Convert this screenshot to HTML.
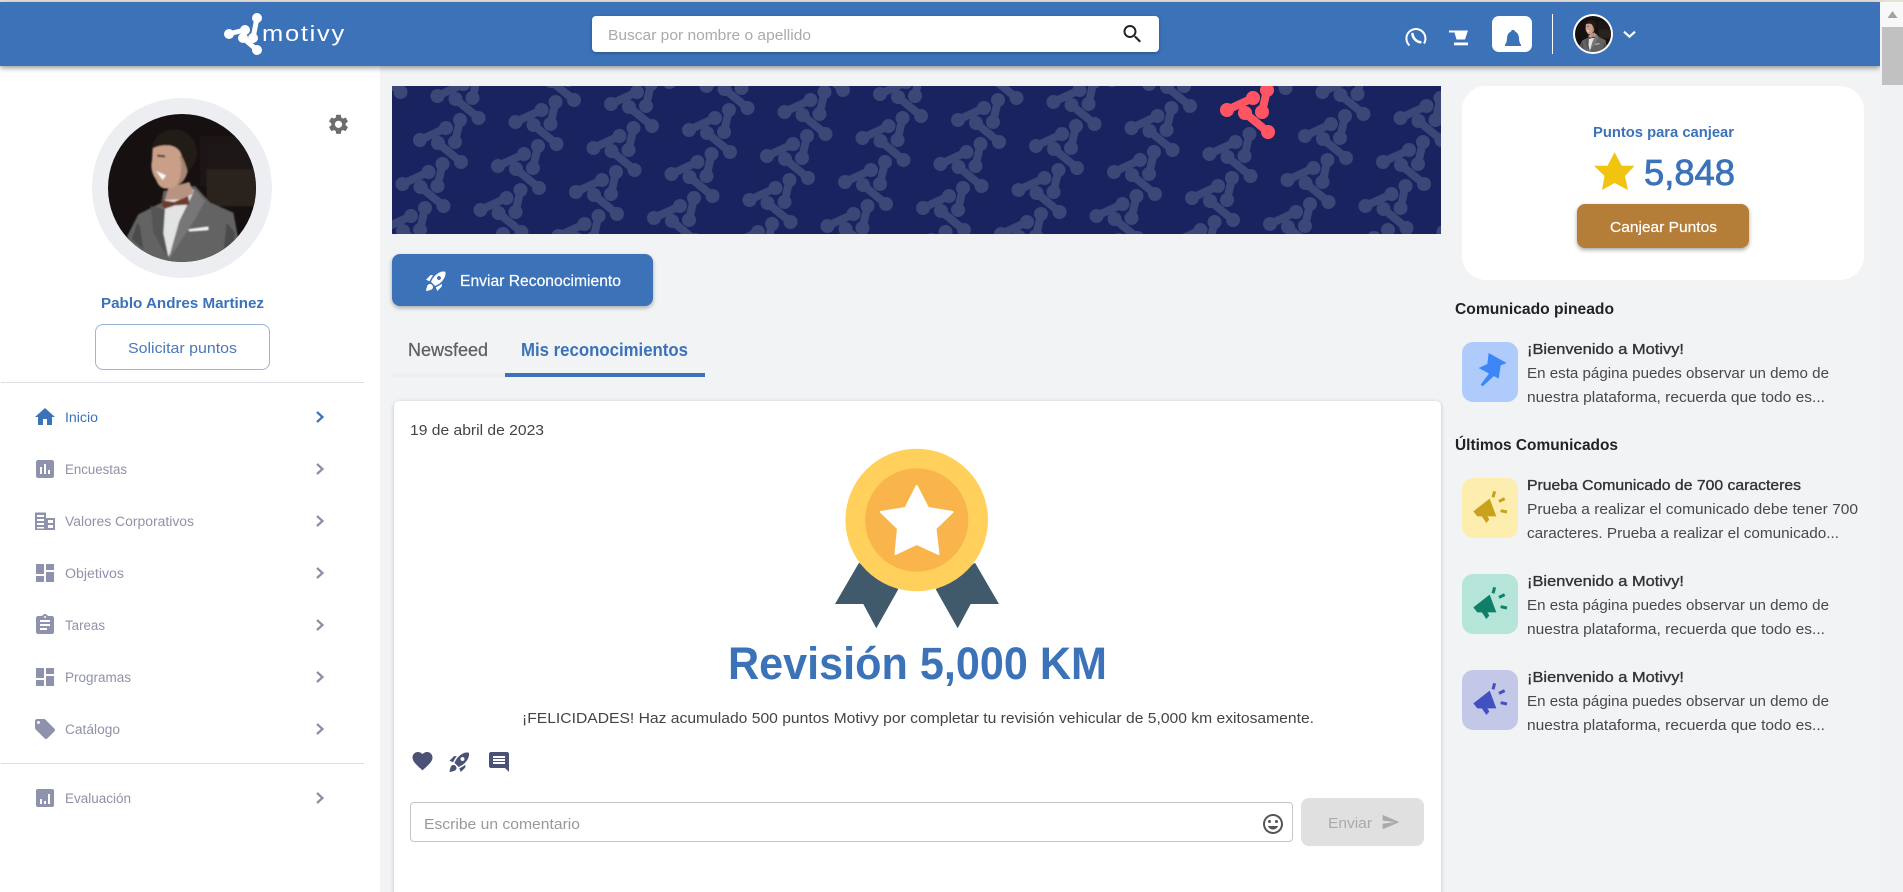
<!DOCTYPE html>
<html lang="es">
<head>
<meta charset="utf-8">
<title>Motivy</title>
<style>
html,body{margin:0;padding:0;width:1903px;height:892px;overflow:hidden;background:#f2f3f5}
body{position:relative;font-family:"Liberation Sans",sans-serif}
div,header,aside,main{position:absolute;box-sizing:border-box}
svg{position:absolute;left:0;top:0;overflow:hidden}
text{font-family:"Liberation Sans",sans-serif}
.nav{font-size:13.5px;fill:#8f92a8}
.ln{font-size:15px;fill:#484848}
.tt{font-size:15px;fill:#333;stroke:#333;stroke-width:.35px}
.hd{font-size:15.5px;font-weight:bold;fill:#222}
</style>
</head>
<body>
<div style="left:0;top:0;width:1903px;height:2px;background:#e6e1d8"></div>
<aside style="left:0;top:66px;width:380px;height:826px;background:#fff"></aside>
<header style="left:0;top:2px;width:1880px;height:64px;background:#3b72b8;box-shadow:0 2px 5px rgba(0,0,0,.4)"></header>
<div style="left:1880px;top:2px;width:23px;height:890px;background:#f1f2f4"></div>
<div style="left:1880px;top:2px;width:23px;height:25px;background:#f8f8f8"></div>
<div style="left:1882px;top:27px;width:21px;height:58px;background:#c1c1c1"></div>
<div style="left:592px;top:16px;width:567px;height:36px;background:#fff;border-radius:4px;box-shadow:0 1px 3px rgba(0,0,0,.3)"></div>
<div style="left:1492px;top:16px;width:40px;height:36px;background:#fff;border-radius:7px"></div>
<div style="left:1552px;top:14px;width:1px;height:40px;background:#fff"></div>
<div style="left:92px;top:98px;width:180px;height:180px;border-radius:50%;background:#eceef2"></div>
<div style="left:95px;top:324px;width:175px;height:46px;background:#fff;border:1px solid #9db4da;border-radius:8px"></div>
<div style="left:1px;top:382px;width:363px;height:1px;background:#dcdfe4"></div>
<div style="left:1px;top:763px;width:363px;height:1px;background:#dcdfe4"></div>

<svg style="left:392px;top:86px" width="1049" height="148" viewBox="0 0 1049 148">
  <defs>
    <g id="m" fill="currentColor" stroke="currentColor" stroke-width="0">
      <line x1="-18" y1="-3" x2="8" y2="-15" stroke-width="8"/><circle cx="-18" cy="-3" r="7"/><circle cx="8" cy="-15" r="7"/>
      <line x1="22" y1="-23" x2="17" y2="-1" stroke-width="8"/><circle cx="22" cy="-23" r="7"/><circle cx="17" cy="-1" r="7"/>
      <line x1="0" y1="0" x2="23" y2="19" stroke-width="8"/><circle cx="0" cy="0" r="7"/><circle cx="23" cy="19" r="7"/>
    </g>
    <g id="r2"><use href="#m"/><use href="#m" x="78" y="26"/></g>
    <g id="r4"><use href="#r2"/><use href="#r2" x="156" y="52"/></g>
    <g id="r8"><use href="#r4"/><use href="#r4" x="312" y="104"/></g>
    <g id="r16"><use href="#r8"/><use href="#r8" x="624" y="208"/></g>
    <g id="c2"><use href="#r16"/><use href="#r16" x="-17.5" y="44"/></g>
    <g id="c4"><use href="#c2"/><use href="#c2" x="-35" y="88"/></g>
    <g id="c8"><use href="#c4"/><use href="#c4" x="-70" y="176"/></g>
    <g id="c16"><use href="#c8"/><use href="#c8" x="-140" y="352"/></g>
  </defs>
  <rect width="1049" height="148" fill="#182360"/>
  <g style="color:#3a4777"><use href="#c16" x="65" y="-435"/></g>
  <g style="color:#ff5462"><use href="#m" x="853" y="27"/></g>
</svg>

<div style="left:392px;top:254px;width:261px;height:52px;background:#3b72b8;border-radius:8px;box-shadow:0 2px 4px rgba(0,0,0,.3)"></div>
<div style="left:392px;top:373px;width:113px;height:4px;background:#eeeff1"></div>
<div style="left:505px;top:373px;width:200px;height:4px;background:#3b72b8"></div>
<main style="left:394px;top:401px;width:1047px;height:520px;background:#fff;border-radius:5px;box-shadow:0 1px 4px rgba(0,0,0,.22)"></main>
<div style="left:410px;top:802px;width:883px;height:40px;background:#fff;border:1px solid #c6c6c6;border-radius:4px"></div>
<div style="left:1301px;top:798px;width:123px;height:48px;background:#e0e0e0;border-radius:8px"></div>
<div style="left:1462px;top:86px;width:402px;height:194px;background:#fff;border-radius:24px"></div>
<div style="left:1577px;top:204px;width:172px;height:44px;background:#b47d38;border-radius:8px;box-shadow:0 2px 4px rgba(0,0,0,.35)"></div>
<div style="left:1462px;top:342px;width:56px;height:60px;background:#aecbfc;border-radius:11px"></div>
<div style="left:1462px;top:478px;width:56px;height:60px;background:#fdeeb0;border-radius:11px"></div>
<div style="left:1462px;top:574px;width:56px;height:60px;background:#b5e5d9;border-radius:11px"></div>
<div style="left:1462px;top:670px;width:56px;height:60px;background:#c3c8e8;border-radius:11px"></div>

<svg width="1903" height="892" viewBox="0 0 1903 892">
  <defs>
    <clipPath id="pc"><circle cx="246" cy="246" r="222"/></clipPath>
    <filter id="bl" x="-5%" y="-5%" width="110%" height="110%"><feGaussianBlur stdDeviation="2.5"/></filter>
    <g id="photo" clip-path="url(#pc)">
      <rect width="492" height="492" fill="#161110"/>
      <g filter="url(#bl)">
        <rect x="300" y="90" width="190" height="150" fill="#1f1815"/>
        <rect x="320" y="190" width="170" height="110" fill="#2b221e"/>
        <path d="M190 255L285 240 330 290 400 320 415 400 400 480 100 480 82 390 115 325 185 290z" fill="#636363"/>
        <path d="M112 350L95 400 130 430 120 360zM380 350L370 440 400 430 405 380z" fill="#4c4c4c"/>
        <path d="M188 300L190 380 205 452 250 385 285 290 280 250 200 270z" fill="#e2e3e3"/>
        <path d="M285 250L315 285 285 340 205 462 238 345z" fill="#777"/>
        <path d="M152 300L195 310 190 385 205 460 160 380z" fill="#555"/>
        <path d="M205 245L268 228 282 262 240 280 195 282z" fill="#b89380"/>
        <path d="M158 125C172 108 215 105 235 125C250 150 255 190 250 215C240 240 215 250 192 247C178 243 172 232 168 220C160 212 150 185 156 165z" fill="#c99f89"/>
        <path d="M238 150C258 150 268 180 262 200C255 225 240 235 228 242C245 215 248 180 238 150z" fill="#a98572"/>
        <path d="M158 128C155 100 185 70 225 70C265 72 292 105 290 145C288 170 275 190 262 195C258 175 250 160 245 150C240 130 225 118 200 118C185 118 170 120 158 128z" fill="#211a18"/>
        <path d="M172 146L195 148 195 154 172 152z" fill="#4a3229"/>
        <path d="M168 195L198 208 188 222z" fill="#fbf8f5"/>
        <path d="M183 282L222 288 265 270 268 296 225 298 190 310z" fill="#6e3b2f"/>
        <path d="M265 370L325 362 325 372 268 376z" fill="#f4f4f4"/>
      </g>
    </g>
    <g id="mega" transform="scale(.3333)" fill="currentColor" stroke="currentColor">
      <path d="M34 100L83 62 103 115 46 115z" stroke="none"/>
      <path d="M58 113L73 135 82 125 72 108z" stroke="none"/>
      <path d="M98 40L93 58M111 70L128 62M116 98L135 102" stroke-width="9" fill="none"/>
    </g>
  </defs>

  <!-- logo -->
  <g fill="#fff" stroke="#fff">
    <line x1="228" y1="34" x2="245" y2="30" stroke-width="5"/>
    <line x1="257" y1="18" x2="253" y2="38" stroke-width="5"/>
    <line x1="243" y1="38" x2="257" y2="50" stroke-width="5"/>
    <g stroke="none"><circle cx="229" cy="34" r="5"/><circle cx="245" cy="30" r="5"/><circle cx="257" cy="18" r="5"/><circle cx="253" cy="38" r="5"/><circle cx="243" cy="38" r="5"/><circle cx="257" cy="50" r="5"/></g>
  </g>
  <text x="262" y="41" font-size="22" letter-spacing="1.5" fill="#fff" textLength="84" lengthAdjust="spacingAndGlyphs">motivy</text>

  <!-- header -->
  <text x="608" y="40" font-size="15" fill="#aaa" textLength="203" lengthAdjust="spacingAndGlyphs">Buscar por nombre o apellido</text>
  <path transform="translate(1120.500 22)" fill="#222" d="M15.5 14h-.79l-.28-.27C15.41 12.59 16 11.11 16 9.5 16 5.91 13.09 3 9.5 3S3 5.91 3 9.5 5.91 16 9.5 16c1.61 0 3.09-.59 4.23-1.57l.27.28v.79l5 4.99L20.49 19l-4.99-5zm-6 0C7.01 14 5 11.99 5 9.5S7.01 5 9.5 5 14 7.01 14 9.5 11.99 14 9.500 14z"/>
  <path d="M1409.500 45.500A9.500 9.500 0 1 1 1424 43.500" fill="none" stroke="#fff" stroke-width="2"/>
  <path d="M1412.500 34c.2 3.600 3.500 7.600 7.800 8.200" fill="none" stroke="#fff" stroke-width="2.600" stroke-linecap="round"/>
  <path d="M1449 30.500h19l-3 9h-8.500l-2-7h-5.500z" fill="#fff"/>
  <rect x="1454" y="42.500" width="14" height="2.800" fill="#fff"/>
  <path d="M1505 46h16v-1.200c-2-2.500-1.800-5-2.200-8-.3-2.500-1.800-4.500-3.800-5.300l-.8-1.500h-2.400l-.8 1.500c-2 .8-3.500 2.800-3.800 5.300-.4 3-.2 5.500-2.200 8z" fill="#3b72b8"/>
  <circle cx="1593" cy="34" r="20" fill="#fff"/>
  <g transform="translate(1593 34) scale(.0811) translate(-246 -246)"><use href="#photo"/></g>
  <path d="M1624 31.700L1629.500 36.700 1635 31.700" fill="none" stroke="#fff" stroke-width="2.200"/>

  <!-- profile -->
  <g transform="translate(100 106) scale(.3333)"><use href="#photo"/></g>
  <path transform="translate(326.500 112.300)" fill="#6d6d6d" d="M19.140 12.940c.04-.3.06-.61.06-.94 0-.32-.02-.64-.07-.94l2.030-1.580c.18-.14.23-.41.12-.61l-1.920-3.320c-.12-.22-.37-.29-.59-.22l-2.390.96c-.5-.38-1.030-.7-1.620-.94l-.36-2.540c-.04-.24-.24-.41-.48-.41h-3.840c-.24 0-.43.17-.47.41l-.36 2.540c-.59.24-1.130.57-1.620.94l-2.390-.96c-.22-.08-.47 0-.59.22L2.740 8.870c-.12.21-.08.47.12.61l2.030 1.580c-.05.3-.09.63-.09.94s.02.64.07.94l-2.030 1.580c-.18.14-.23.41-.12.61l1.920 3.320c.12.22.37.29.59.22l2.390-.96c.5.38 1.030.7 1.620.94l.36 2.540c.05.24.24.41.48.41h3.840c.24 0 .44-.17.47-.41l.36-2.540c.59-.24 1.130-.56 1.620-.94l2.390.96c.22.08.47 0 .59-.22l1.920-3.320c.12-.22.07-.47-.12-.61l-2.010-1.580zM12 15.600c-1.980 0-3.600-1.620-3.600-3.600s1.620-3.600 3.600-3.600 3.600 1.620 3.600 3.600-1.620 3.600-3.600 3.600z"/>
  <text x="101" y="308" font-size="15" font-weight="bold" fill="#3b72b8" textLength="163" lengthAdjust="spacingAndGlyphs">Pablo Andres Martinez</text>
  <text x="128" y="353" font-size="15" fill="#4a78b8" textLength="109" lengthAdjust="spacingAndGlyphs">Solicitar puntos</text>

  <!-- nav icons -->
  <path transform="translate(33 405)" fill="#3b72b8" d="M10 20v-6h4v6h5v-8h3L12 3 2 12h3v8z"/>
  <g fill="#8f92ac">
    <path transform="translate(33 457)" d="M19 3H5c-1.100 0-2 .9-2 2v14c0 1.100.9 2 2 2h14c1.100 0 2-.9 2-2V5c0-1.100-.9-2-2-2zM9 17H7v-7h2v7zm4 0h-2V7h2v10zm4 0h-2v-4h2v4z"/>
    <path fill-rule="evenodd" d="M35 512.500h11v5.500h9v12H35zM37 515v2h7v-2zM37 519v2h7v-2zM37 523v2h7v-2zM37 527v1.500h7V527zM48 520v3h5v-3zM48 525v3h5v-3z"/>
    <path transform="translate(33 561)" d="M3 13h8V3H3v10zm0 8h8v-6H3v6zm10 0h8V11h-8v10zm0-18v6h8V3h-8z"/>
    <path transform="translate(33 613)" d="M19 3h-4.180C14.400 1.840 13.300 1 12 1c-1.300 0-2.400.84-2.820 2H5c-1.100 0-2 .9-2 2v14c0 1.100.9 2 2 2h14c1.100 0 2-.9 2-2V5c0-1.100-.9-2-2-2zm-7 0c.55 0 1 .45 1 1s-.45 1-1 1-1-.45-1-1 .45-1 1-1zm2 14H7v-2h7v2zm3-4H7v-2h10v2zm0-4H7V7h10v2z"/>
    <path transform="translate(33 665)" d="M3 13h8V3H3v10zm0 8h8v-6H3v6zm10 0h8V11h-8v10zm0-18v6h8V3h-8z"/>
    <path transform="translate(33 717)" d="M21.410 11.580l-9-9C12.050 2.220 11.550 2 11 2H4c-1.100 0-2 .9-2 2v7c0 .55.22 1.050.59 1.420l9 9c.36.36.86.58 1.410.58.55 0 1.050-.22 1.410-.59l7-7c.37-.36.59-.86.59-1.410 0-.55-.23-1.060-.59-1.420zM5.500 7C4.670 7 4 6.330 4 5.500S4.670 4 5.500 4 7 4.670 7 5.500 6.330 7 5.500 7z"/>
    <path fill-rule="evenodd" d="M38 789h14a2 2 0 0 1 2 2v14a2 2 0 0 1-2 2H38a2 2 0 0 1-2-2v-14a2 2 0 0 1 2-2zM40 799v5h2v-5zM44 801v3h2v-3zM48 794v10h2v-10z"/>
  </g>
  <!-- nav text -->
  <text x="65" y="422" font-size="13.500" fill="#3b72b8" textLength="33" lengthAdjust="spacingAndGlyphs">Inicio</text>
  <text class="nav" x="65" y="474" textLength="62" lengthAdjust="spacingAndGlyphs">Encuestas</text>
  <text class="nav" x="65" y="526" textLength="129" lengthAdjust="spacingAndGlyphs">Valores Corporativos</text>
  <text class="nav" x="65" y="578" textLength="59" lengthAdjust="spacingAndGlyphs">Objetivos</text>
  <text class="nav" x="65" y="630" textLength="40" lengthAdjust="spacingAndGlyphs">Tareas</text>
  <text class="nav" x="65" y="682" textLength="66" lengthAdjust="spacingAndGlyphs">Programas</text>
  <text class="nav" x="65" y="734" textLength="55" lengthAdjust="spacingAndGlyphs">Catálogo</text>
  <text class="nav" x="65" y="803" textLength="66" lengthAdjust="spacingAndGlyphs">Evaluación</text>
  <g fill="none" stroke-width="2.200">
    <path d="M317 412L322.500 417 317 422" stroke="#3b72b8"/>
    <g stroke="#8a8fa6">
      <path d="M317 464L322.500 469 317 474"/><path d="M317 516L322.500 521 317 526"/><path d="M317 568L322.500 573 317 578"/><path d="M317 620L322.500 625 317 630"/><path d="M317 672L322.500 677 317 682"/><path d="M317 724L322.500 729 317 734"/><path d="M317 793L322.500 798 317 803"/>
    </g>
  </g>

  <!-- button + tabs -->
  <path transform="translate(424 269)" fill="#fff" d="M9.190 6.350c-2.040 2.290-3.440 5.580-3.570 5.890L2 10.690l4.050-4.050c.47-.47 1.150-.68 1.810-.55l1.330.26zM11.170 17c0 0 3.740-1.550 5.890-3.700 5.400-5.400 4.500-9.620 4.210-10.570-.95-.3-5.170-1.190-10.570 4.210C8.550 9.060 7 12.830 7 12.830L11.170 17zm6.480-2.190c-2.290 2.040-5.580 3.440-5.890 3.570L13.310 22l4.050-4.050c.47-.47.68-1.150.55-1.810l-.26-1.330zM9 18c0 .83-.34 1.580-.88 2.120C6.940 21.300 2 22 2 22s.7-4.940 1.880-6.120C4.420 15.340 5.170 15 6 15c1.660 0 3 1.340 3 3zm4-9c0-1.100.9-2 2-2s2 .9 2 2-.9 2-2 2-2-.9-2-2z"/>
  <text x="460" y="286" font-size="15.500" fill="#fff" stroke="#fff" stroke-width=".2" textLength="161" lengthAdjust="spacingAndGlyphs">Enviar Reconocimiento</text>
  <text x="408" y="356" font-size="18" fill="#5f5f5f" stroke="#5f5f5f" stroke-width=".25" textLength="80" lengthAdjust="spacingAndGlyphs">Newsfeed</text>
  <text x="521" y="356" font-size="18" font-weight="bold" fill="#3b72b8" textLength="167" lengthAdjust="spacingAndGlyphs">Mis reconocimientos</text>

  <!-- card -->
  <text x="410" y="435" font-size="15" fill="#444" textLength="134" lengthAdjust="spacingAndGlyphs">19 de abril de 2023</text>
  <path d="M859 562.700L835 604 863.300 604 876.300 628.300 898.300 589.300zM975 562.700L999 604 970.700 604 957.700 628.300 935.700 589.300z" fill="#40596b"/>
  <circle cx="916.700" cy="520" r="71.300" fill="#ffd15c"/>
  <circle cx="916.700" cy="520" r="51.700" fill="#f9b54c"/>
  <path d="M916.700 486L905.500 508 881 512 898 528.500 895.500 554 916.700 544 938.500 554 935.500 528.500 952.500 512 928 508z" fill="#fff" stroke="#fff" stroke-width="2" stroke-linejoin="round"/>
  <text x="728" y="679" font-size="45" font-weight="bold" fill="#3b72b8" textLength="379" lengthAdjust="spacingAndGlyphs">Revisión 5,000 KM</text>
  <text x="522" y="723" font-size="15" fill="#444" textLength="792" lengthAdjust="spacingAndGlyphs">¡FELICIDADES! Haz acumulado 500 puntos Motivy por completar tu revisión vehicular de 5,000 km exitosamente.</text>
  <g fill="#4b5275">
    <path transform="translate(410.500 749)" d="M12 21.350l-1.450-1.320C5.400 15.360 2 12.280 2 8.500 2 5.420 4.420 3 7.500 3c1.740 0 3.410.81 4.500 2.090C13.090 3.810 14.760 3 16.500 3 19.580 3 22 5.420 22 8.500c0 3.780-3.400 6.860-8.550 11.540L12 21.350z"/>
    <path transform="translate(447.500 750)" d="M9.190 6.350c-2.040 2.290-3.440 5.580-3.570 5.890L2 10.690l4.050-4.050c.47-.47 1.150-.68 1.810-.55l1.330.26zM11.170 17c0 0 3.740-1.550 5.890-3.700 5.400-5.400 4.500-9.620 4.210-10.570-.95-.3-5.170-1.190-10.570 4.210C8.550 9.060 7 12.830 7 12.830L11.170 17zm6.480-2.190c-2.290 2.040-5.580 3.440-5.890 3.570L13.310 22l4.050-4.050c.47-.47.68-1.150.55-1.810l-.26-1.330zM9 18c0 .83-.34 1.580-.88 2.120C6.940 21.300 2 22 2 22s.7-4.940 1.880-6.120C4.420 15.340 5.170 15 6 15c1.660 0 3 1.340 3 3zm4-9c0-1.100.9-2 2-2s2 .9 2 2-.9 2-2 2-2-.9-2-2z"/>
    <path transform="translate(487 750)" d="M21.990 4c0-1.100-.89-2-1.990-2H4c-1.100 0-2 .9-2 2v12c0 1.100.9 2 2 2h14l4 4-.01-18zM18 14H6v-2h12v2zm0-3H6V9h12v2zm0-3H6V6h12v2z"/>
  </g>
  <text x="424" y="829" font-size="15" fill="#999" textLength="156" lengthAdjust="spacingAndGlyphs">Escribe un comentario</text>
  <g transform="translate(1261 812)" fill="#555">
    <path d="M11.990 2C6.470 2 2 6.480 2 12s4.470 10 9.990 10C17.520 22 22 17.520 22 12S17.520 2 11.990 2zM12 20c-4.420 0-8-3.580-8-8s3.580-8 8-8 8 3.580 8 8-3.580 8-8 8z"/>
    <circle cx="15.500" cy="9.500" r="1.500"/><circle cx="8.500" cy="9.500" r="1.500"/>
    <path d="M12 17.500c2.330 0 4.310-1.460 5.110-3.500H6.890c.8 2.040 2.780 3.500 5.110 3.500z"/>
  </g>
  <text x="1328" y="828" font-size="15" fill="#aaa" textLength="44" lengthAdjust="spacingAndGlyphs">Enviar</text>
  <path transform="translate(1381 812.500) scale(.8)" fill="#aaa" d="M2.010 21L23 12 2.010 3 2 10l15 2-15 2z"/>

  <!-- points -->
  <text x="1593" y="137" font-size="14.500" font-weight="bold" fill="#3b72b8" textLength="141" lengthAdjust="spacingAndGlyphs">Puntos para canjear</text>
  <path d="M1614.600 152.300L1621.700 165.700 1634.600 165.700 1625 176 1628 190 1614.600 183 1602 190 1604.500 176 1594 165.700 1607.500 165.700z" fill="#f1c40f"/>
  <text x="1644" y="185" font-size="36" fill="#3b72b8" stroke="#3b72b8" stroke-width=".8" textLength="91" lengthAdjust="spacingAndGlyphs">5,848</text>
  <text x="1610" y="232" font-size="15" fill="#fff" stroke="#fff" stroke-width=".2" textLength="107" lengthAdjust="spacingAndGlyphs">Canjear Puntos</text>

  <!-- comunicados -->
  <text class="hd" x="1455" y="314" textLength="159" lengthAdjust="spacingAndGlyphs">Comunicado pineado</text>
  <g transform="translate(1458 338) scale(.3333)" fill="#3d86f5">
    <path d="M92 45L146 75 128 82 122 122 62 90 88 78z"/>
    <path d="M98 100L68 140 74 145 110 112z"/>
  </g>
  <text class="tt" x="1527" y="354" textLength="157" lengthAdjust="spacingAndGlyphs">¡Bienvenido a Motivy!</text>
  <text class="ln" x="1527" y="378" textLength="302" lengthAdjust="spacingAndGlyphs">En esta página puedes observar un demo de</text>
  <text class="ln" x="1527" y="402" textLength="298" lengthAdjust="spacingAndGlyphs">nuestra plataforma, recuerda que todo es...</text>

  <text class="hd" x="1455" y="450" textLength="163" lengthAdjust="spacingAndGlyphs">Últimos Comunicados</text>

  <g transform="translate(1462 478)" style="color:#c9a21c"><use href="#mega"/></g>
  <text class="tt" x="1527" y="490" textLength="274" lengthAdjust="spacingAndGlyphs">Prueba Comunicado de 700 caracteres</text>
  <text class="ln" x="1527" y="514" textLength="331" lengthAdjust="spacingAndGlyphs">Prueba a realizar el comunicado debe tener 700</text>
  <text class="ln" x="1527" y="538" textLength="312" lengthAdjust="spacingAndGlyphs">caracteres. Prueba a realizar el comunicado...</text>

  <g transform="translate(1462 574)" style="color:#0f7f68"><use href="#mega"/></g>
  <text class="tt" x="1527" y="586" textLength="157" lengthAdjust="spacingAndGlyphs">¡Bienvenido a Motivy!</text>
  <text class="ln" x="1527" y="610" textLength="302" lengthAdjust="spacingAndGlyphs">En esta página puedes observar un demo de</text>
  <text class="ln" x="1527" y="634" textLength="298" lengthAdjust="spacingAndGlyphs">nuestra plataforma, recuerda que todo es...</text>

  <g transform="translate(1462 670)" style="color:#4351c0"><use href="#mega"/></g>
  <text class="tt" x="1527" y="682" textLength="157" lengthAdjust="spacingAndGlyphs">¡Bienvenido a Motivy!</text>
  <text class="ln" x="1527" y="706" textLength="302" lengthAdjust="spacingAndGlyphs">En esta página puedes observar un demo de</text>
  <text class="ln" x="1527" y="730" textLength="298" lengthAdjust="spacingAndGlyphs">nuestra plataforma, recuerda que todo es...</text>

  <path d="M1892.500 11L1897.500 18H1887.500z" fill="#a3a3a3"/>
</svg>
</body>
</html>
